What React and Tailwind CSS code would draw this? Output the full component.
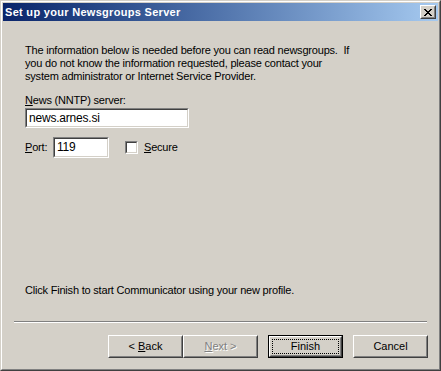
import React from "react";

const font = { fontFamily: '"Liberation Sans", Arial, sans-serif' };

const U = ({ children }) => <span className="underline underline-offset-[1px]">{children}</span>;

const Button = ({ children, disabled, isDefault }) => {
    if (isDefault) {
        return (
            <div className="w-[75px] h-[23px] border border-black">
                <div className="w-full h-full border border-t-white border-l-white border-r-[#404040] border-b-[#404040]">
                    <div className="w-full h-full border border-t-[#d4d0c8] border-l-[#d4d0c8] border-r-[#808080] border-b-[#808080] p-px">
                        <div className="w-full h-full border border-dotted border-black flex items-center justify-center text-[11px] text-black">
                            <span>{children}</span>
                        </div>
                    </div>
                </div>
            </div>
        );
    }
    return (
        <div className="w-[75px] h-[23px] border border-t-white border-l-white border-r-[#404040] border-b-[#404040]">
            <div
                className={
                    disabled
                        ? "w-full h-full border border-t-[#d4d0c8] border-l-[#d4d0c8] border-r-[#808080] border-b-[#808080] flex items-center justify-center text-[11px] text-[#808080] [text-shadow:1px_1px_0_#ffffff]"
                        : "w-full h-full border border-t-[#d4d0c8] border-l-[#d4d0c8] border-r-[#808080] border-b-[#808080] flex items-center justify-center text-[11px] text-black"
                }
            >
                <span className="whitespace-pre">{children}</span>
            </div>
        </div>
    );
};

const Sunken = ({ className, children }) => (
    <div className={"border border-t-[#808080] border-l-[#808080] border-r-white border-b-white " + className}>
        <div className="w-full h-full border border-t-[#404040] border-l-[#404040] border-r-[#d4d0c8] border-b-[#d4d0c8] bg-white flex items-center pl-[2px] text-[12px] text-black">
            {children}
        </div>
    </div>
);

export default function App() {
    return (
        <div
            className="w-[441px] h-[371px] border border-t-[#d4d0c8] border-l-[#d4d0c8] border-r-[#404040] border-b-[#404040] bg-[#d4d0c8]"
            style={font}
        >
            <div className="w-full h-full border border-t-white border-l-white border-r-[#808080] border-b-[#808080] p-px flex flex-col">
                {/* title bar */}
                <div className="h-[18px] bg-gradient-to-r from-[#0a246a] to-[#a6caf0] flex items-center justify-between pl-[2px] pr-[2px]">
                    <span className="text-white font-bold text-[11px] tracking-[0.3px]">Set up your Newsgroups Server</span>
                    <div className="w-[16px] h-[14px] border border-t-white border-l-white border-r-[#404040] border-b-[#404040] bg-[#d4d0c8]">
                        <div className="w-full h-full border border-t-[#d4d0c8] border-l-[#d4d0c8] border-r-[#808080] border-b-[#808080] flex items-center justify-center">
                            <svg width="8" height="7" viewBox="0 0 8 7" shapeRendering="crispEdges">
                                <path d="M0 0h2v1h-2zM6 0h2v1h-2zM1 1h2v1h-2zM5 1h2v1h-2zM2 2h4v1h-4zM3 3h2v1h-2zM2 4h4v1h-4zM1 5h2v1h-2zM5 5h2v1h-2zM0 6h2v1h-2zM6 6h2v1h-2z" fill="#000" />
                            </svg>
                        </div>
                    </div>
                </div>

                {/* body */}
                <div className="flex-1 flex flex-col text-[11px] text-black leading-[13px] tracking-[-0.2px]">
                    <p className="pl-[22px] pt-[23px]">
                        The information below is needed before you can read newsgroups.&nbsp; If
                        <br />
                        you do not know the information requested, please contact your
                        <br />
                        system administrator or Internet Service Provider.
                    </p>

                    <div className="pl-[22px] mt-[11px]">
                        <U>N</U>ews (NNTP) server:
                    </div>
                    <div className="pl-[22px] mt-px">
                        <Sunken className="w-[164px] h-[20px]">news.arnes.si</Sunken>
                    </div>

                    <div className="pl-[22px] mt-[9px] flex items-center">
                        <span className="w-[28px]">
                            <U>P</U>ort:
                        </span>
                        <Sunken className="w-[56px] h-[21px]">119</Sunken>
                        <div className="ml-[16px] w-[13px] h-[13px] border border-t-[#808080] border-l-[#808080] border-r-white border-b-white">
                            <div className="w-full h-full border border-t-[#404040] border-l-[#404040] border-r-[#d4d0c8] border-b-[#d4d0c8] bg-white" />
                        </div>
                        <span className="ml-[6px]">
                            <U>S</U>ecure
                        </span>
                    </div>

                    <div className="flex-1" />

                    <p className="pl-[22px]">Click Finish to start Communicator using your new profile.</p>

                    <div className="mx-[11px] mt-[24px] border-t border-t-[#808080] border-b border-b-white" />

                    <div className="flex justify-end pr-[10px] mt-[12px] mb-[10px] tracking-normal">
                        <Button>
                            {"< "}
                            <U>B</U>ack
                        </Button>
                        <Button disabled>
                            <U>N</U>
                            {"ext >"}
                        </Button>
                        <div className="ml-[10px]">
                            <Button isDefault>Finish</Button>
                        </div>
                        <div className="ml-[10px]">
                            <Button>Cancel</Button>
                        </div>
                    </div>
                </div>
            </div>
        </div>
    );
}
